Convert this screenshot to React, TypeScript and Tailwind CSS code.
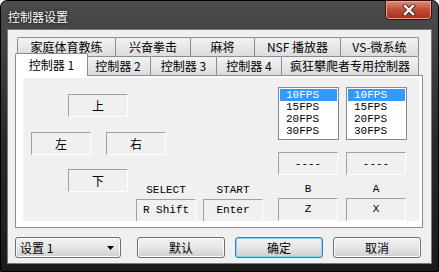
import React from 'react';

const cjk = "font-['SimSun','Noto_Sans_CJK_SC',sans-serif]";
const mono = "font-['Liberation_Mono','Noto_Sans_CJK_SC',monospace]";

const topTabs = [
  { label: '家庭体育教练', w: 'w-[99px]' },
  { label: '兴奋拳击', w: 'w-[76px]' },
  { label: '麻将', w: 'w-[65px]' },
  { label: 'NSF 播放器', w: 'w-[87px]' },
  { label: 'VS-微系统', w: 'w-[79px]' },
];

const lowTabs = [
  { label: '控制器 2', w: 'w-[66px]' },
  { label: '控制器 3', w: 'w-[67px]' },
  { label: '控制器 4', w: 'w-[66px]' },
  { label: '疯狂攀爬者专用控制器', w: 'w-[138px]' },
];

const fps = ['10FPS', '15FPS', '20FPS', '30FPS'];

const Box = ({ children, latin }: { children: React.ReactNode; latin?: boolean }) => (
  <div
    className={`w-[60px] h-[23px] flex items-center justify-center border-t border-l border-t-[#a0a0a0] border-l-[#a0a0a0] border-b border-r border-b-white border-r-white text-black ${
      latin ? `${mono} text-[11px]` : `${cjk} text-[12px]`
    }`}
  >
    {children}
  </div>
);

const Label = ({ children }: { children: React.ReactNode }) => (
  <div className={`h-[15px] w-[60px] flex items-start justify-center ${mono} text-[11px] leading-[12px] text-black`}>
    {children}
  </div>
);

const ListBox = () => (
  <div className="w-[61px] h-[54px] bg-white border border-[#828790] p-px flex flex-col">
    {fps.map((f, i) => (
      <div
        key={f}
        className={`h-[12px] pl-[6px] flex items-center ${mono} text-[11px] leading-none ${
          i === 0 ? 'bg-[#3399ff] text-white' : 'text-black'
        }`}
      >
        {f}
      </div>
    ))}
  </div>
);

const Tab = ({ label, w, first }: { label: string; w: string; first?: boolean }) => (
  <div
    className={`${w} h-[19px] ${first ? '' : '-ml-px'} flex items-center justify-center border border-b-0 border-[#898c95] rounded-t-[2px] bg-gradient-to-b from-[#f3f3f3] to-[#dcdcdc] ${cjk} text-[12px] text-black`}
  >
    {label}
  </div>
);

const Button = ({ children, primary }: { children: React.ReactNode; primary?: boolean }) => (
  <div
    className={`w-[88px] h-[21px] flex items-center justify-center rounded-[3px] border bg-gradient-to-b from-[#f2f2f2] via-[#e6e6e6] to-[#cfcfcf] ${cjk} text-[12px] text-black ${
      primary ? 'border-[#3c7fb1] shadow-[inset_0_0_0_1px_#7ed4f4]' : 'border-[#707070] shadow-[inset_0_0_0_1px_#fbfbfb]'
    }`}
  >
    {children}
  </div>
);

export default function App() {
  return (
    <div className="w-[439px] h-[272px] flex flex-col rounded-t-[7px] border border-black bg-gradient-to-b from-[#4d4d4d] via-[#2a2a2a] to-[#1b1b1b] px-[6px] pb-[7px]">
      {/* title bar */}
      <div className="h-[28px] flex items-start justify-between">
        <div className={`pt-[7px] pl-px ${cjk} text-[12px] text-white [text-shadow:0_0_3px_#000]`}>控制器设置</div>
        <div className="w-[47px] h-[20px] -mt-px flex items-center justify-center rounded-b-[4px] border border-[#3a0c05] bg-gradient-to-b from-[#d9907d] via-[#c24a32] to-[#a7301b] shadow-[inset_0_0_0_1px_#e8a595]">
          <svg width="14" height="12" viewBox="0 0 14 12">
            <path d="M3 2 L11 10 M11 2 L3 10" stroke="#3b2a26" strokeWidth="4.2" strokeLinecap="square" />
            <path d="M3 2 L11 10 M11 2 L3 10" stroke="#ffffff" strokeWidth="2.4" strokeLinecap="square" />
          </svg>
        </div>
      </div>

      {/* client */}
      <div className="flex-1 bg-[#f0f0f0] border border-[#7a7a7a] pt-[7px] pl-[7px] pr-[6px] flex flex-col">
        {/* tab headers */}
        <div className="flex flex-col">
          <div className="flex pl-[2px] h-[19px]">
            {topTabs.map((t, i) => (
              <Tab key={t.label} label={t.label} w={t.w} first={i === 0} />
            ))}
          </div>
          <div className="flex items-end pl-[2px] h-[19px]">
            <div
              className={`relative z-10 w-[73px] h-[23px] -ml-[2px] -mr-[2px] -mb-px flex items-center justify-center border border-b-0 border-[#898c95] rounded-t-[2px] bg-white ${cjk} text-[12px] text-black`}
            >
              控制器 1
            </div>
            {lowTabs.map(t => (
              <Tab key={t.label} label={t.label} w={t.w} />
            ))}
          </div>
        </div>

        {/* tab page */}
        <div className="w-[408px] h-[153px] bg-white border border-[#898c95] pl-[7px] pr-[3px] pt-[2px] pb-[6px]">
          <div className="h-full bg-[#f0f0f0] flex overflow-hidden">
            {/* left side */}
            <div className="flex flex-col pl-[8px] pt-[16px] w-[255px] shrink-0">
              <div className="ml-[37px]">
                <Box>上</Box>
              </div>
              <div className="flex gap-[15px] mt-[15px]">
                <Box>左</Box>
                <Box>右</Box>
              </div>
              <div className="flex items-start mt-[14px]">
                <div className="ml-[37px]">
                  <Box>下</Box>
                </div>
                <div className="flex gap-[7px] ml-[8px] pt-[15px]">
                  <div className="flex flex-col">
                    <Label>SELECT</Label>
                    <Box latin>R Shift</Box>
                  </div>
                  <div className="flex flex-col">
                    <Label>START</Label>
                    <Box latin>Enter</Box>
                  </div>
                </div>
              </div>
            </div>

            {/* right side */}
            <div className="flex gap-[7px] pt-[9px]">
              {['B|Z', 'A|X'].map(k => {
                const [name, key] = k.split('|');
                return (
                  <div key={name} className="w-[61px] flex flex-col">
                    <ListBox />
                    <div className="mt-[12px]">
                      <Box latin>----</Box>
                    </div>
                    <div className="mt-[8px]">
                      <Label>{name}</Label>
                    </div>
                    <Box latin>{key}</Box>
                  </div>
                );
              })}
            </div>
          </div>
        </div>

        {/* bottom buttons */}
        <div className="flex items-center mt-[9px]">
          <div
            className={`w-[106px] h-[21px] flex items-center justify-between pl-[4px] pr-[6px] rounded-[3px] border border-[#707070] bg-gradient-to-b from-[#f2f2f2] via-[#e6e6e6] to-[#cfcfcf] shadow-[inset_0_0_0_1px_#fbfbfb] ${cjk} text-[12px] text-black`}
          >
            <span>设置 1</span>
            <svg width="7" height="4" viewBox="0 0 7 4">
              <path d="M0 0 H7 L3.5 4 Z" fill="#000" />
            </svg>
          </div>
          <div className="ml-[16px]">
            <Button>默认</Button>
          </div>
          <div className="ml-[10px]">
            <Button primary>确定</Button>
          </div>
          <div className="ml-[10px]">
            <Button>取消</Button>
          </div>
        </div>
      </div>
    </div>
  );
}
